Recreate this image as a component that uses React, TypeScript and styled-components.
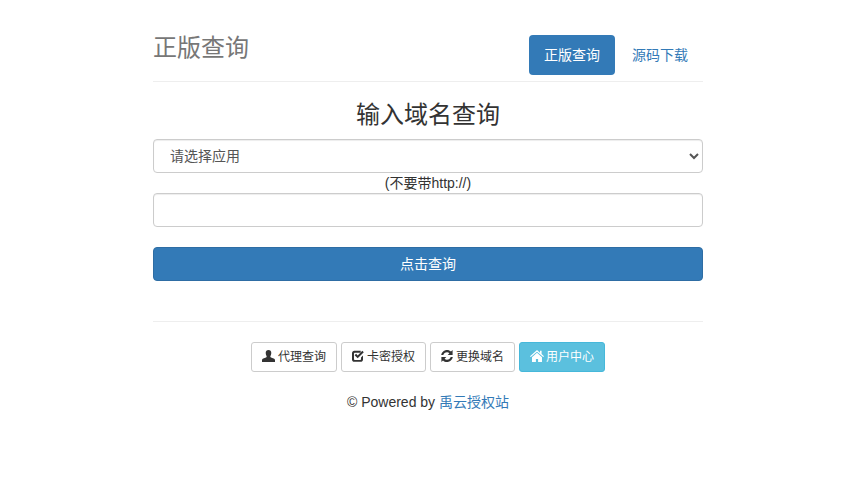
import React from "react";
import styled, { createGlobalStyle } from "styled-components";

const Global = createGlobalStyle`
  html, body { margin: 0; padding: 0; background: #fff; }
  body {
    font-family: "Liberation Sans", "Noto Sans CJK SC", sans-serif;
    font-size: 14px;
    line-height: 20px;
    color: #333;
  }
  * { box-sizing: border-box; }
`;

const Page = styled.div`
  width: 550px;
  margin: 0 0 0 153px;
  padding-top: 35px;
`;

const Header = styled.header`
  display: flex;
  justify-content: space-between;
  height: 47px;
  border-bottom: 1px solid #eee;
`;

const Brand = styled.h3`
  margin: 0;
  font-size: 24px;
  font-weight: 400;
  line-height: 26px;
  color: #777;
`;

const Pills = styled.nav`
  display: flex;
  gap: 2px;
  height: 40px;
`;

const Pill = styled.a<{ $active?: boolean }>`
  display: block;
  padding: 10px 15px;
  border-radius: 4px;
  color: ${(p) => (p.$active ? "#fff" : "#337ab7")};
  background: ${(p) => (p.$active ? "#337ab7" : "transparent")};
  text-decoration: none;
`;

const Heading = styled.h3`
  margin: 19px 0 10px;
  font-size: 24px;
  font-weight: 400;
  line-height: 28px;
  text-align: center;
`;

const Select = styled.select`
  display: block;
  width: 100%;
  height: 34px;
  padding: 6px 12px;
  font: inherit;
  color: #555;
  background: #fff;
  border: 1px solid #ccc;
  border-radius: 4px;
  box-shadow: inset 0 1px 1px rgba(0, 0, 0, 0.075);
`;

const Hint = styled.div`
  text-align: center;
`;

const Input = styled.input`
  display: block;
  width: 100%;
  height: 34px;
  padding: 6px 12px;
  font: inherit;
  color: #555;
  background: #fff;
  border: 1px solid #ccc;
  border-radius: 4px;
  box-shadow: inset 0 1px 1px rgba(0, 0, 0, 0.075);
`;

const Submit = styled.button`
  display: block;
  width: 100%;
  height: 34px;
  margin-top: 20px;
  padding: 6px 12px;
  font: inherit;
  color: #fff;
  background: #337ab7;
  border: 1px solid #2e6da4;
  border-radius: 4px;
`;

const Rule = styled.hr`
  margin: 40px 0 20px;
  border: 0;
  border-top: 1px solid #eee;
`;

const Actions = styled.div`
  display: flex;
  justify-content: center;
  gap: 4px;
`;

const ActionButton = styled.a<{ $info?: boolean }>`
  display: inline-flex;
  align-items: center;
  gap: ${(p) => (p.$info ? "2px" : "3px")};
  height: 30px;
  padding: 0 10px;
  font-size: 12px;
  line-height: 18px;
  text-decoration: none;
  border-radius: 3px;
  color: ${(p) => (p.$info ? "#fff" : "#333")};
  background: ${(p) => (p.$info ? "#5bc0de" : "#fff")};
  border: 1px solid ${(p) => (p.$info ? "#46b8da" : "#ccc")};
`;

const Glyph = styled.svg<{ $w?: number }>`
  width: ${(p) => p.$w ?? 12}px;
  height: 12px;
  margin-bottom: 2px;
  flex: none;
  fill: currentColor;
`;

const Footer = styled.p`
  margin: 20px 0 0;
  text-align: center;
`;

const FooterLink = styled.a`
  color: #337ab7;
  text-decoration: none;
`;

const UserIcon = () => (
  <Glyph $w={13} viewBox="0 0 13 12">
    <path d="M6.500 0c1.800 0 2.800 1.300 2.800 3.100 0 1.100-.4 2.100-.8 2.800-.3.500-.3 1.100.1 1.400 1 .7 3.900 1 4.400 2.400V12H0V9.700c.5-1.400 3.400-1.700 4.400-2.400.4-.3.4-.9.1-1.400-.4-.7-.8-1.700-.8-2.800C3.700 1.300 4.700 0 6.500 0z" />
  </Glyph>
);

const CheckIcon = () => (
  <Glyph viewBox="0 0 12 12">
    <path d="M2.300.8h6.400v2H2.800a.8.800 0 0 0-.8.8v5.600c0 .4.400.8.800.8h5.400c.4 0 .8-.4.800-.8V7.400l2-2v4c0 1.300-1.100 2.400-2.400 2.400H2.300C1 11.800 0 10.700 0 9.400V3.200C0 1.900 1 .8 2.300.8z" />
    <path d="M2.600 5.300 4.100 3.800l1.600 1.600L10.300.7l1.500 1.500-6.100 6.100z" />
  </Glyph>
);

const RefreshIcon = () => (
  <Glyph viewBox="0 0 12 12">
    <path d="M6 0c1.600 0 3 .6 4 1.600L11.600.1v4.900H6.700l1.700-1.700C7.800 2.600 7 2.200 6 2.200c-1.800 0-3.300 1.200-3.700 2.800H.2C.7 2.200 3.100 0 6 0z" />
    <path d="M6 12c-1.600 0-3-.6-4-1.600L.4 11.900V7h4.900L3.600 8.700C4.200 9.400 5 9.800 6 9.800c1.800 0 3.300-1.200 3.700-2.800h2.100c-.5 2.800-2.900 5-5.800 5z" />
  </Glyph>
);

const HomeIcon = () => (
  <Glyph $w={14} viewBox="0 0 14 12">
    <path d="M7 0 0 6.200l.8.9L7 1.700l6.200 5.400.8-.9-2.400-2.100V.8H10v2z" />
    <path d="M7 2.800 2 7.200V12h3.900V9h2.200v3H12V7.200z" />
  </Glyph>
);

export default function App() {
  return (
    <>
      <Global />
      <Page>
        <Header>
          <Brand>正版查询</Brand>
          <Pills>
            <Pill $active href="#">正版查询</Pill>
            <Pill href="#">源码下载</Pill>
          </Pills>
        </Header>
        <Heading>输入域名查询</Heading>
        <Select defaultValue="">
          <option value="">请选择应用</option>
        </Select>
        <Hint>(不要带http://)</Hint>
        <Input type="text" />
        <Submit type="button">点击查询</Submit>
        <Rule />
        <Actions>
          <ActionButton href="#"><UserIcon />代理查询</ActionButton>
          <ActionButton href="#"><CheckIcon />卡密授权</ActionButton>
          <ActionButton href="#"><RefreshIcon />更换域名</ActionButton>
          <ActionButton $info href="#"><HomeIcon />用户中心</ActionButton>
        </Actions>
        <Footer>
          © Powered by <FooterLink href="#">禹云授权站</FooterLink>
        </Footer>
      </Page>
    </>
  );
}
